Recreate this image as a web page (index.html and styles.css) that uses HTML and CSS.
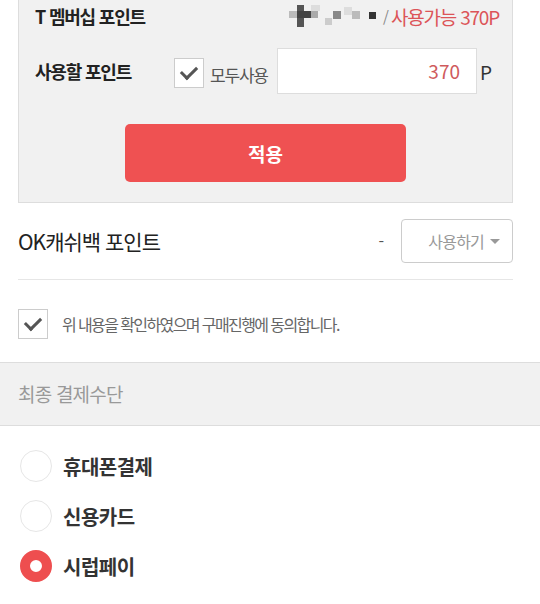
FILE: index.html
```html
<!DOCTYPE html>
<html lang="ko">
<head>
  <meta charset="UTF-8">
  <title>결제</title>
  <link rel="stylesheet" href="styles.css">
</head>
<body>

  <!-- T 멤버십 포인트 -->
  <div class="point-box">
    <div class="point-row">
      <span class="point-label">T 멤버십 포인트</span>
      <span class="point-info">
        <svg class="masked" width="90" height="22" viewBox="0 0 90 22">
          <rect x="0" y="6" width="8" height="7" fill="#bbb"/>
          <rect x="8" y="0" width="7" height="22" fill="#555"/>
          <rect x="8" y="6" width="14" height="7" fill="#444"/>
          <rect x="22" y="6" width="7" height="7" fill="#aaa"/>
          <rect x="22" y="0" width="9" height="6" fill="#ddd"/>
          <rect x="36" y="13" width="7" height="7" fill="#ccc"/>
          <rect x="44" y="6" width="8" height="8" fill="#888"/>
          <rect x="55" y="2" width="8" height="8" fill="#ddd"/>
          <rect x="63" y="6" width="8" height="8" fill="#bbb"/>
          <rect x="80" y="7" width="7" height="7" fill="#333"/>
        </svg>
        <span class="slash">/</span>
        <span class="available">사용가능 370P</span>
      </span>
    </div>

    <div class="point-row use-row">
      <span class="point-label">사용할 포인트</span>
      <span class="check checked"></span>
      <span class="all-use">모두사용</span>
      <span class="point-input">370</span>
      <span class="unit">P</span>
    </div>

    <div class="btn-wrap">
      <button type="button" class="btn-apply">적용</button>
    </div>
  </div>

  <!-- OK캐쉬백 -->
  <div class="ok-row">
    <span class="ok-label">OK캐쉬백 포인트</span>
    <span class="dash">-</span>
    <span class="select">사용하기 <span class="caret"></span></span>
  </div>

  <!-- 동의 -->
  <div class="agree">
    <span class="check checked"></span>
    <span class="agree-text">위 내용을 확인하였으며 구매진행에 동의합니다.</span>
  </div>

  <!-- 최종 결제수단 -->
  <div class="section-title">최종 결제수단</div>

  <ul class="pay-list">
    <li><span class="radio"></span>휴대폰결제</li>
    <li><span class="radio"></span>신용카드</li>
    <li><span class="radio on"></span>시럽페이</li>
  </ul>

</body>
</html>
```

FILE: styles.css
```css
body {
  margin: 0;
  font-family: "Noto Sans CJK KR", "Noto Sans", sans-serif;
  background: #fff;
  color: #222;
}

.point-box {
  margin: 0 27px 0 18px;
  background: #f1f1f1;
  border: 1px solid #ddd;
  border-top: none;
  padding: 0 16px 20px 16px;
}

.point-row {
  display: flex;
  align-items: center;
  height: 32px;
}

.point-label {
  font-size: 18px;
  font-weight: bold;
  letter-spacing: -1.2px;
  color: #222;
  flex: 1;
}

.point-info {
  display: flex;
  align-items: center;
  margin-right: -3px;
}

.masked {
  margin-right: 4px;
}

.slash {
  color: #888;
  font-size: 15px;
  margin-right: 2px;
}

.available {
  color: #dc5458;
  font-size: 19px;
  letter-spacing: -1.2px;
}

.use-row {
  height: 46px;
  margin-top: 16px;
}

.use-row .point-label {
  flex: none;
  width: 139px;
}

.check {
  display: inline-block;
  width: 28px;
  height: 28px;
  border: 1px solid #ccc;
  background: #fff;
  position: relative;
}

.check.checked::after {
  content: "";
  position: absolute;
  left: 9px;
  top: 4px;
  width: 7px;
  height: 13px;
  border-right: 3px solid #555;
  border-bottom: 3px solid #555;
  transform: rotate(45deg);
}

.use-row .check {
  margin-top: 4px;
}

.all-use {
  font-size: 17px;
  color: #555;
  letter-spacing: -1.2px;
  margin: 6px 0 0 6px;
  width: 67px;
}

.point-input {
  width: 182px;
  height: 44px;
  line-height: 44px;
  border: 1px solid #ddd;
  background: #fff;
  text-align: right;
  padding-right: 16px;
  font-size: 19px;
  color: #cf5a5c;
}

.unit {
  font-size: 19px;
  color: #333;
  margin-left: 3px;
}

.btn-wrap {
  display: flex;
  justify-content: center;
  margin-top: 30px;
}

.btn-apply {
  width: 281px;
  height: 58px;
  border: none;
  border-radius: 5px;
  background: #ef5152;
  color: #fff;
  font-family: inherit;
  font-size: 19px;
  font-weight: bold;
}

.ok-row {
  display: flex;
  align-items: center;
  margin: 0 27px 0 18px;
  height: 76px;
  border-bottom: 1px solid #e6e6e6;
}

.ok-label {
  flex: 1;
  font-size: 21px;
  letter-spacing: -1px;
  color: #222;
}

.dash {
  color: #555;
  margin-right: 17px;
}

.select {
  display: flex;
  align-items: center;
  justify-content: flex-end;
  width: 98px;
  height: 42px;
  border: 1px solid #ccc;
  border-radius: 4px;
  padding-right: 12px;
  font-size: 16px;
  color: #999;
  letter-spacing: -0.8px;
}

.caret {
  margin-left: 6px;
  border-left: 5px solid transparent;
  border-right: 5px solid transparent;
  border-top: 5px solid #999;
}

.agree {
  display: flex;
  align-items: center;
  padding: 29px 18px 23px;
}

.agree-text {
  font-size: 16px;
  color: #666;
  letter-spacing: -1.6px;
  margin-left: 14px;
}

.section-title {
  background: #f1f1f1;
  border-top: 1px solid #ddd;
  border-bottom: 1px solid #ddd;
  height: 62px;
  line-height: 62px;
  padding-left: 18px;
  font-size: 19px;
  color: #999;
  letter-spacing: -0.8px;
}

.pay-list {
  list-style: none;
  margin: 0;
  padding: 15px 0 0 20px;
}

.pay-list li {
  display: flex;
  align-items: center;
  height: 50px;
  font-size: 20px;
  font-weight: bold;
  color: #333;
  letter-spacing: -0.5px;
}

.radio {
  width: 30px;
  height: 30px;
  border: 1px solid #e6e6e6;
  border-radius: 50%;
  margin-right: 11px;
  box-sizing: content-box;
}

.radio.on {
  width: 12px;
  height: 12px;
  border: 10px solid #ee4e4f;
}
```
